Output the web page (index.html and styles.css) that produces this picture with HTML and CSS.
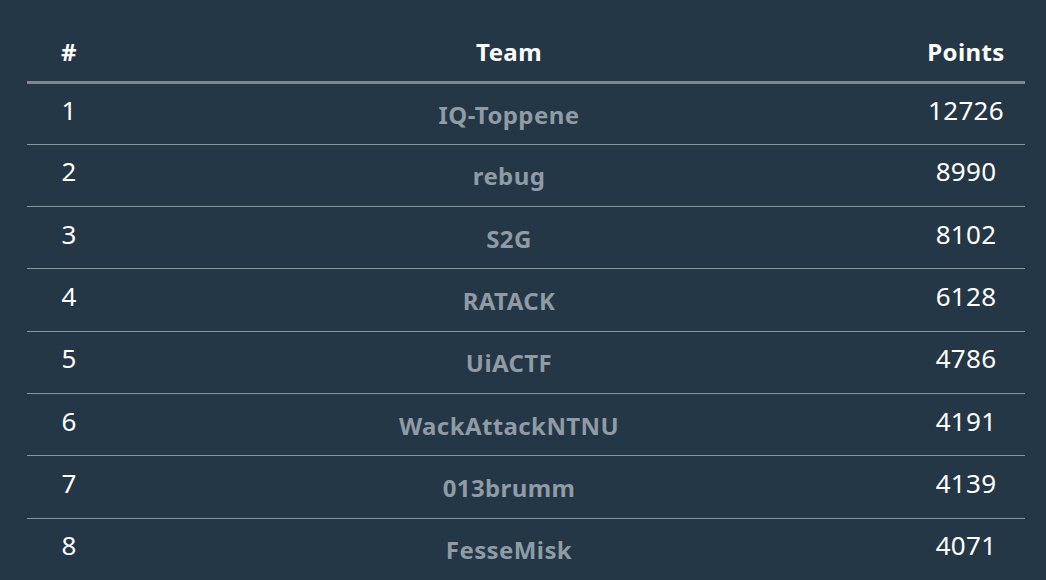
FILE: index.html
```html
<!DOCTYPE html>
<html>
<head>
<meta charset="utf-8">
<link rel="stylesheet" href="styles.css">
</head>
<body>
<div class="board">
  <table class="scores">
    <thead>
      <tr>
        <th class="col-rank">#</th>
        <th class="col-team">Team</th>
        <th class="col-points">Points</th>
      </tr>
    </thead>
    <tbody>
      <tr><td class="rank">1</td><td class="team">IQ-Toppene</td><td class="points">12726</td></tr>
      <tr><td class="rank">2</td><td class="team">rebug</td><td class="points">8990</td></tr>
      <tr><td class="rank">3</td><td class="team">S2G</td><td class="points">8102</td></tr>
      <tr><td class="rank">4</td><td class="team">RATACK</td><td class="points">6128</td></tr>
      <tr><td class="rank">5</td><td class="team">UiACTF</td><td class="points">4786</td></tr>
      <tr><td class="rank">6</td><td class="team">WackAttackNTNU</td><td class="points">4191</td></tr>
      <tr><td class="rank">7</td><td class="team">013brumm</td><td class="points">4139</td></tr>
      <tr><td class="rank">8</td><td class="team">FesseMisk</td><td class="points">4071</td></tr>
    </tbody>
  </table>
</div>
</body>
</html>
```

FILE: styles.css
```css
html, body {
  margin: 0;
  padding: 0;
  background: #243746;
  font-family: "Noto Sans", "DejaVu Sans", sans-serif;
  color: #ffffff;
}

.board {
  padding: 0 21px 0 27px;
}

.scores {
  width: 100%;
  border-collapse: collapse;
  table-layout: fixed;
}

.col-rank { width: 84px; }
.col-points { width: 118px; }

.scores th {
  font-size: 24px;
  font-weight: 700;
  letter-spacing: 0.4px;
  text-align: center;
  height: 82px;
  padding: 0;
  line-height: 24px;
  vertical-align: middle;
  padding-top: 23px;
  box-sizing: border-box;
  border-bottom: 3px solid #7f8890;
}

.scores td {
  height: 62.3px;
  padding: 0;
  text-align: center;
  vertical-align: middle;
  border-bottom: 1px solid #8b949b;
  box-sizing: border-box;
}

.scores tbody tr:last-child td {
  border-bottom: none;
}

.rank, .points {
  font-size: 26px;
  font-weight: 400;
  letter-spacing: 0.3px;
  color: #ffffff;
  padding-bottom: 8px !important;
}

.team {
  font-size: 24px;
  font-weight: 700;
  letter-spacing: 0.4px;
  color: #8f9ba5;
  padding-top: 1px !important;
}
```
